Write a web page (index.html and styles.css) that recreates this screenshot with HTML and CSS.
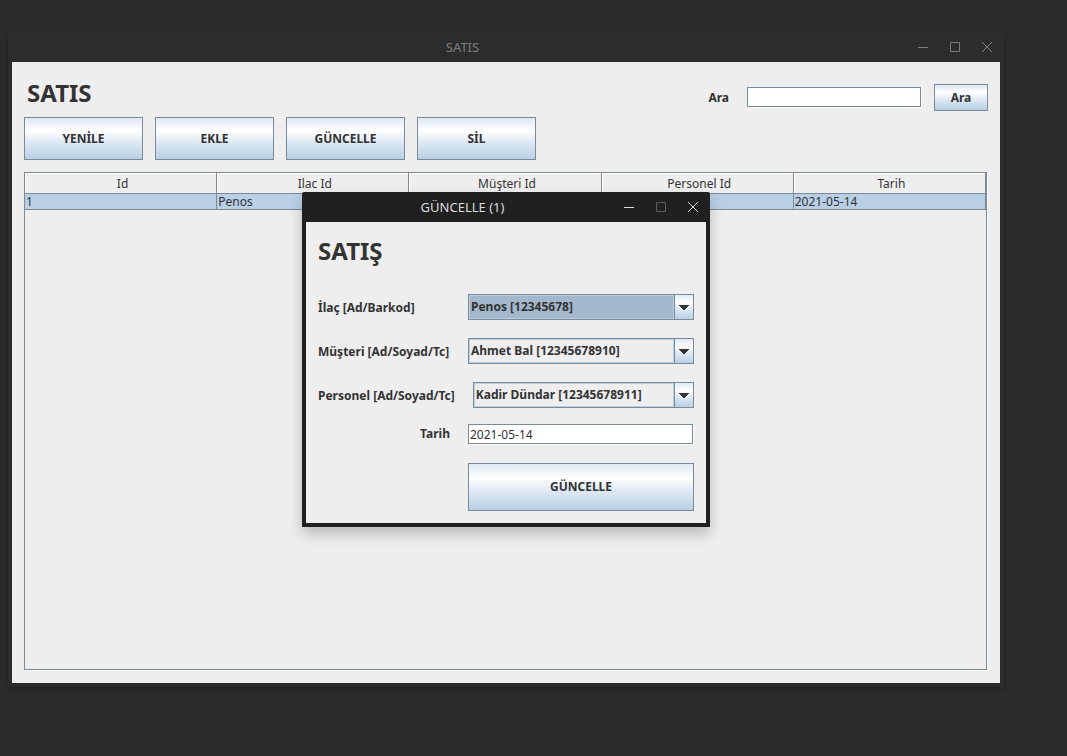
FILE: index.html
```html
<!DOCTYPE html>
<html lang="tr">
<head>
<meta charset="utf-8">
<meta name="viewport" content="width=device-width, initial-scale=1">
<title>SATIS</title>
<link rel="stylesheet" href="styles.css">
</head>
<body>
<main class="desktop">
  <section class="window window-main">
    <header class="titlebar">
      <span class="titlebar-text">SATIS</span>
      <div class="controls">
        <button class="control" type="button" aria-label="Minimize"><svg viewBox="0 0 10 10"><path d="M0 5.5H10"/></svg></button>
        <button class="control" type="button" aria-label="Maximize"><svg viewBox="0 0 10 10"><path d="M.5 .5h9v9h-9z"/></svg></button>
        <button class="control" type="button" aria-label="Close"><svg viewBox="0 0 10 10"><path d="M0 0L10 10M10 0L0 10"/></svg></button>
      </div>
    </header>
    <div class="content">
      <div class="top">
        <h1 class="heading">SATIS</h1>
        <form class="search">
          <label class="label" for="search">Ara</label>
          <input class="field search-field" id="search" type="text">
          <button class="btn btn-search" type="button">Ara</button>
        </form>
      </div>
      <div class="actions">
        <button class="btn" type="button">YENİLE</button>
        <button class="btn" type="button">EKLE</button>
        <button class="btn" type="button">GÜNCELLE</button>
        <button class="btn" type="button">SİL</button>
      </div>
      <div class="table-pane">
        <table class="table">
          <thead>
            <tr><th>Id</th><th>Ilac Id</th><th>Müşteri Id</th><th>Personel Id</th><th>Tarih</th></tr>
          </thead>
          <tbody>
            <tr><td>1</td><td>Penos</td><td></td><td></td><td>2021-05-14</td></tr>
          </tbody>
        </table>
      </div>
    </div>
  </section>

  <section class="window window-dialog" role="dialog" aria-label="GÜNCELLE (1)">
    <header class="titlebar">
      <span class="titlebar-text">GÜNCELLE (1)</span>
      <div class="controls">
        <button class="control" type="button" aria-label="Minimize"><svg viewBox="0 0 10 10"><path d="M0 5.5H10"/></svg></button>
        <button class="control" type="button" aria-label="Maximize" disabled><svg viewBox="0 0 10 10"><path d="M.5 .5h9v9h-9z"/></svg></button>
        <button class="control" type="button" aria-label="Close"><svg viewBox="0 0 10 10"><path d="M0 0L10 10M10 0L0 10"/></svg></button>
      </div>
    </header>
    <form class="content form">
      <h2 class="heading">SATIŞ</h2>
      <div class="row">
        <label class="label" for="ilac">İlaç [Ad/Barkod]</label>
        <div class="combo combo-active">
          <select class="combo-select" id="ilac"><option>Penos [12345678]</option></select>
          <span class="combo-arrow"><svg viewBox="0 0 10 5"><path d="M0 0h10v1h-1v1h-1v1h-1v1h-1v1h-2v-1h-1v-1h-1v-1h-1v-1h-1z"/></svg></span>
        </div>
      </div>
      <div class="row">
        <label class="label" for="musteri">Müşteri [Ad/Soyad/Tc]</label>
        <div class="combo">
          <select class="combo-select" id="musteri"><option>Ahmet Bal [12345678910]</option></select>
          <span class="combo-arrow"><svg viewBox="0 0 10 5"><path d="M0 0h10v1h-1v1h-1v1h-1v1h-1v1h-2v-1h-1v-1h-1v-1h-1v-1h-1z"/></svg></span>
        </div>
      </div>
      <div class="row">
        <label class="label" for="personel">Personel [Ad/Soyad/Tc]</label>
        <div class="combo">
          <select class="combo-select" id="personel"><option>Kadir Dündar [12345678911]</option></select>
          <span class="combo-arrow"><svg viewBox="0 0 10 5"><path d="M0 0h10v1h-1v1h-1v1h-1v1h-1v1h-2v-1h-1v-1h-1v-1h-1v-1h-1z"/></svg></span>
        </div>
      </div>
      <div class="row row-date">
        <label class="label label-end" for="tarih">Tarih</label>
        <input class="field date-field" id="tarih" type="text" value="2021-05-14">
      </div>
      <div class="row">
        <span class="label"></span>
        <button class="btn btn-submit" type="button">GÜNCELLE</button>
      </div>
    </form>
  </section>
</main>
</body>
</html>
```

FILE: styles.css
```css
:root {
  --line: #7a8a99;
  --sel: #b8cfe5;
  --panel: #eeeeee;
  --ink: #333333;
  --metal: linear-gradient(#dde8f3 0%, #ffffff 30%, #dde8f3 60%, #b8cfe5 100%);
}

* { box-sizing: border-box; }

body {
  margin: 0;
  background: #2b2b2b;
  color: var(--ink);
  font: 12px/16px "Noto Sans", sans-serif;
}

button, input, select {
  margin: 0;
  color: inherit;
  font: inherit;
}

.desktop {
  position: relative;
  display: flex;
  min-height: 100vh;
  padding: 32px 63px 69px 8px;
}

.window {
  display: flex;
  flex-direction: column;
  padding: 0 4px 4px;
  border-radius: 2px 2px 0 0;
}

.window-main {
  flex: 1;
  background: #2c2c2c;
  color: #7d7d7d;
  box-shadow: 0 2px 5px rgba(0, 0, 0, 0.25);
}

.window-dialog {
  position: absolute;
  top: 192px;
  left: 302px;
  width: 408px;
  background: #202020;
  color: #dcdcdc;
  box-shadow: 0 7px 14px rgba(0, 0, 0, 0.22);
}

.titlebar {
  display: flex;
  align-items: center;
  height: 30px;
}

.titlebar-text {
  flex: 1;
  font-size: 13px;
  text-align: center;
}

.controls {
  display: flex;
  gap: 22px;
  padding: 0 8px 0 5px;
}

.control {
  display: flex;
  padding: 0;
  border: 0;
  background: none;
}

.control:disabled { color: #5c5c5c; }

.control svg {
  width: 10px;
  height: 10px;
  fill: none;
  stroke: currentColor;
}

.content {
  display: flex;
  flex: 1;
  flex-direction: column;
  padding: 12px;
  background: var(--panel);
  color: var(--ink);
}

.heading {
  margin: 0;
  font-size: 24px;
  font-weight: 700;
  line-height: 34px;
}

.top {
  display: flex;
  align-items: center;
  justify-content: space-between;
  height: 43px;
  padding-left: 3px;
}

.top .heading { padding-bottom: 5px; }

.search {
  display: flex;
  align-items: center;
  padding-top: 4px;
}

.label { font-weight: 700; }

.field {
  height: 20px;
  padding: 0 1px;
  border: 1px solid var(--line);
  border-radius: 0;
  background: #ffffff;
  box-shadow: 1px 1px 0 #ffffff;
  outline: 0;
}

.search-field {
  width: 174px;
  margin: 0 13px 1px 18px;
}

.btn {
  width: 119px;
  height: 43px;
  padding: 0;
  border: 1px solid var(--line);
  background: var(--metal);
  font-weight: 700;
}

.btn-search {
  width: 54px;
  height: 27px;
}

.actions {
  display: flex;
  gap: 12px;
  margin-bottom: 12px;
}

.table-pane {
  flex: 1;
  margin: 0 1px 1px 0;
  border: 1px solid var(--line);
  box-shadow: 1px 1px 0 #ffffff;
}

.table {
  width: 100%;
  border-collapse: separate;
  border-spacing: 0;
  table-layout: fixed;
}

.table th,
.table td {
  padding: 0 1px;
  border: solid var(--line);
  border-width: 0 1px 1px 0;
}

.table th {
  height: 21px;
  padding: 2px 0 0 4px;
  box-shadow: inset 1px 1px 0 #ffffff;
  font-weight: 400;
}

.table td {
  height: 16px;
  background: var(--sel);
  line-height: 15px;
}

.form {
  gap: 18px;
}

.form .heading { margin-bottom: 8px; }

.row {
  display: flex;
  align-items: center;
  gap: 18px;
}

.row .label {
  min-width: 132px;
  padding-top: 2px;
}

.label-end { text-align: right; }

.row-date {
  align-items: flex-start;
  height: 21px;
  margin-top: -2px;
}

.combo {
  display: flex;
  flex: 1;
  height: 26px;
  border: 1px solid var(--line);
}

.combo-active { background: #a3b8cc; }

.combo-select {
  flex: 1;
  min-width: 0;
  padding: 0 1px 1px;
  border: 1px solid var(--sel);
  border-radius: 0;
  background: transparent;
  font-weight: 700;
  appearance: none;
  outline: 0;
}

.combo-arrow {
  display: flex;
  align-items: center;
  justify-content: center;
  width: 19px;
  border-left: 1px solid var(--line);
  background: var(--metal);
  pointer-events: none;
}

.combo-arrow svg {
  width: 10px;
  height: 5px;
  fill: var(--ink);
  shape-rendering: crispEdges;
}

.date-field {
  flex: 1;
  margin-right: 1px;
}

.btn-submit {
  flex: 1;
  height: 48px;
}
```
